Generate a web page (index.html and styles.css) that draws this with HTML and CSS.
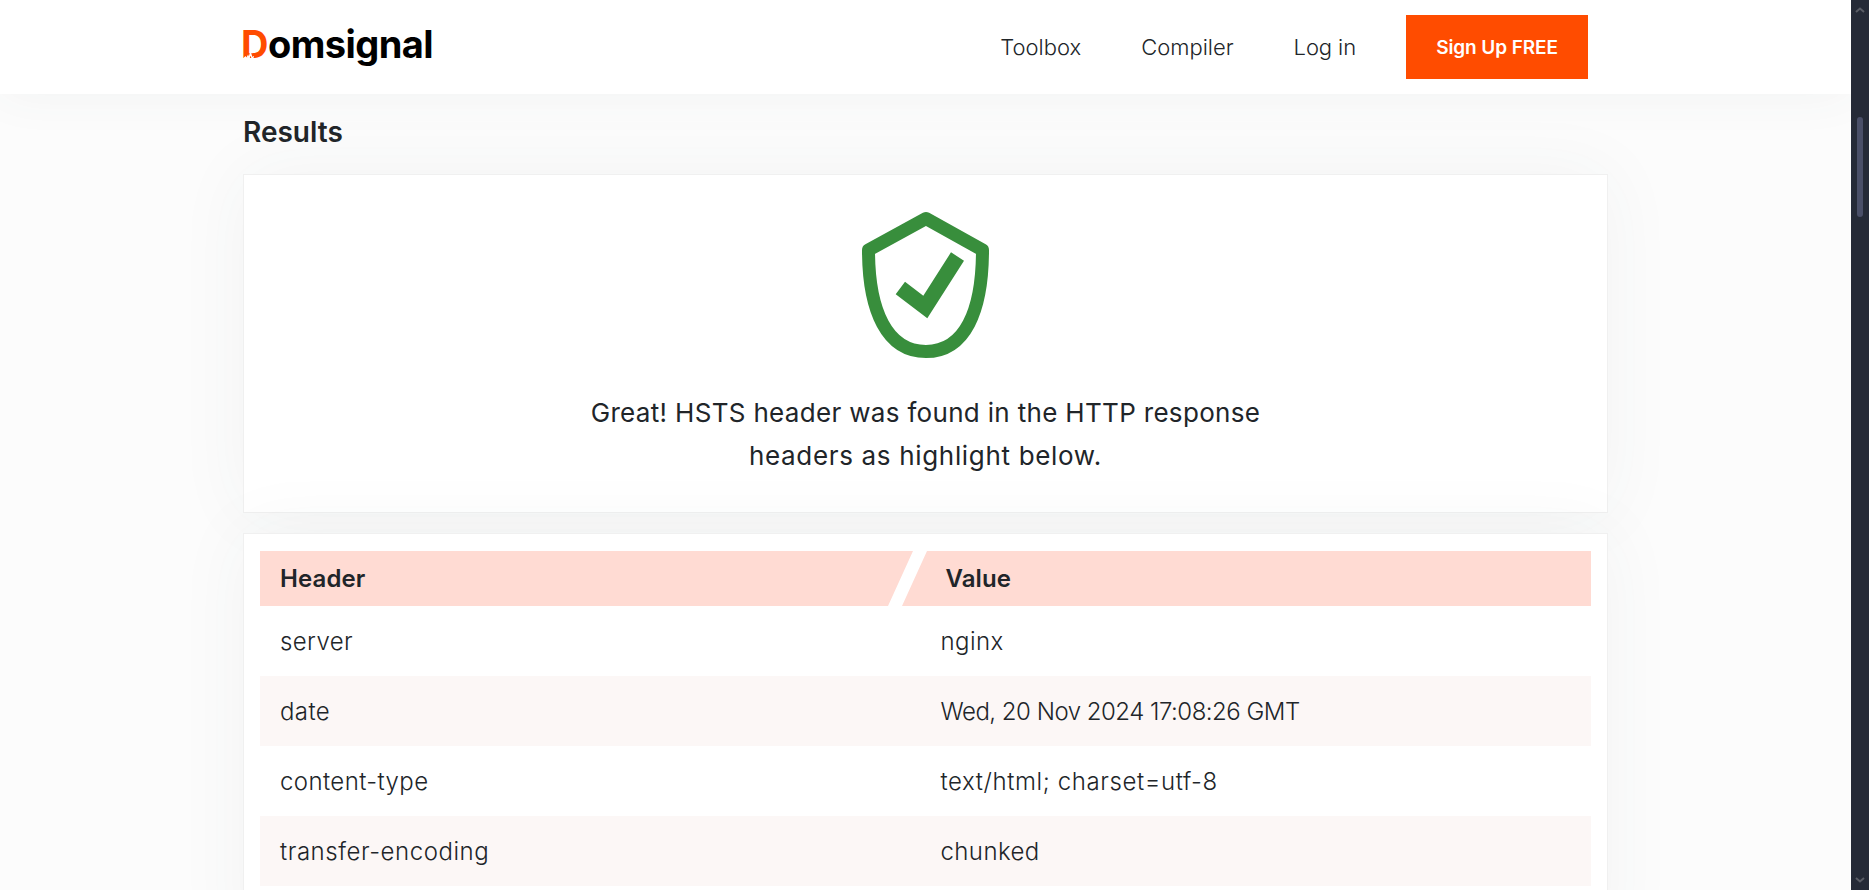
FILE: index.html
```html
<!DOCTYPE html>
<html lang="en">
<head>
<meta charset="utf-8">
<title>HSTS Checker Results - Domsignal</title>
<link rel="stylesheet" href="styles.css">
</head>
<body>
<div class="viewport">
  <div class="page">
    <header class="topbar">
      <div class="topbar-inner">
        <a class="logo"><span class="logo-d">D<svg class="logo-spike" viewBox="0 0 11 8" aria-hidden="true"><path d="M0 7 L2.5 5 L3.5 6.8 L5 4 L6 6.5 L7.5 1 L9 6 L11 4.5" fill="none" stroke="#fff" stroke-width="1.3"/></svg></span>omsignal</a>
        <nav class="nav">
          <a class="nav-link">Toolbox</a>
          <a class="nav-link">Compiler</a>
          <a class="nav-link">Log in</a>
          <a class="signup">Sign Up FREE</a>
        </nav>
      </div>
    </header>
    <main class="content">
      <h2 class="title">Results</h2>
      <section class="card verdict">
        <svg class="shield" viewBox="0 0 128 148" aria-hidden="true">
          <path d="M64 7.5 L6.5 39 C6.5 100 25 140.5 64 140.5 C103 140.5 120.5 100 120.5 39 Z" fill="none" stroke="#388e3c" stroke-width="13" stroke-linejoin="round"/>
          <path d="M33.7 83.3 L43 70.7 L61.3 84.7 L89 41.3 L102 49.7 L65.3 107.3 Z" fill="#388e3c"/>
        </svg>
        <p class="message">Great! HSTS header was found in the HTTP response<br><span class="message-second">headers as highlight below.</span></p>
      </section>
      <section class="card table-card">
        <div class="thead">
          <div class="th th-left">Header</div>
          <div class="th th-right">Value</div>
        </div>
        <div class="row"><span>server</span><span>nginx</span></div>
        <div class="row alt"><span>date</span><span class="digits">Wed, 20 Nov 2024 17:08:26 GMT</span></div>
        <div class="row"><span>content-type</span><span class="mime">text/html; charset=utf-8</span></div>
        <div class="row alt"><span class="long">transfer-encoding</span><span>chunked</span></div>
      </section>
    </main>
  </div>
  <aside class="scrollbar">
    <svg class="arrow" viewBox="0 0 10 6" aria-hidden="true"><path d="M1 5 L5 1.5 L9 5" fill="none" stroke="#5a5d66" stroke-width="2"/></svg>
    <div class="thumb"></div>
    <svg class="arrow arrow-down" viewBox="0 0 10 6" aria-hidden="true"><path d="M1 1 L5 4.5 L9 1" fill="none" stroke="#5a5d66" stroke-width="2"/></svg>
  </aside>
</div>
</body>
</html>
```
FILE: styles.css
```css
* { box-sizing: border-box; }
html, body { margin: 0; height: 100%; overflow: hidden; }
body { font-family: Inter, "Liberation Sans", sans-serif; color: #212529; background: #fcfcfc; }
.viewport { display: flex; height: 890px; }
.page { flex: 1; min-width: 0; overflow: hidden; }
.topbar { height: 94px; background: #fff; position: relative; z-index: 1; box-shadow: 0 0 50px rgba(60, 90, 80, .06); }
.topbar-inner { width: 1364px; margin-left: 243px; height: 94px; display: flex; align-items: center; justify-content: space-between; }
.logo { font-size: 38px; font-weight: 700; color: #000; letter-spacing: -0.55px; line-height: 1; margin-left: -2px; padding-bottom: 6px; }
.logo-d { color: #ff4c00; position: relative; }
.logo-spike { position: absolute; left: 2px; bottom: 7px; width: 11px; height: 8px; }
.nav { display: flex; align-items: center; margin-right: 19px; }
.nav-link { font-size: 22px; font-weight: 300; color: #212529; margin-right: 60px; }
.nav-link:nth-child(3) { margin-right: 50px; letter-spacing: -0.1px; }
.signup { width: 182px; height: 64px; background: #ff4c00; color: #fff; font-size: 19px; font-weight: 600; letter-spacing: -0.1px; display: flex; align-items: center; justify-content: center; }
.content { width: 1365px; margin-left: 243px; padding-top: 19px; }
.title { margin: 0 0 23px; font-size: 28px; line-height: 38px; font-weight: 600; }
.card { background: #fff; border: 1px solid #f0f0f0; box-shadow: 0 0 70px rgba(60, 80, 80, .05); }
.verdict { height: 339px; display: flex; flex-direction: column; align-items: center; padding-top: 36px; }
.shield { width: 128px; height: 148px; display: block; }
.message { margin: 32px 0 0; font-size: 26px; line-height: 43px; letter-spacing: .32px; text-align: center; font-weight: 400; }
.message-second { letter-spacing: .67px; }
.table-card { margin-top: 20px; padding: 17px 16px 0; height: 420px; }
.thead { display: grid; grid-template-columns: 1fr 1fr; height: 55px; background: #ffdbd3; clip-path: polygon(0 0, 653px 0, 628px 100%, 0 100%, 0 0, 667px 0, 100% 0, 100% 100%, 642px 100%, 667px 0); }
.th { font-size: 24px; font-weight: 600; line-height: 55px; letter-spacing: .1px; }
.th-left { padding-left: 20px; }
.th-right { padding-left: 20px; }
.row { display: grid; grid-template-columns: 660.5px 1fr; height: 70px; align-items: center; padding-left: 20px; font-size: 24px; font-weight: 300; letter-spacing: .4px; }
.row .digits { letter-spacing: -0.5px; }
.row .mime { letter-spacing: .6px; }
.row .long { letter-spacing: .55px; }
.alt { background: #fcf7f6; }
.scrollbar { width: 18px; flex: none; background: #252a37; position: relative; }
.arrow { position: absolute; left: 4px; top: 7px; width: 10px; height: 6px; }
.arrow-down { top: auto; bottom: 7px; }
.thumb { position: absolute; left: 6px; top: 117px; width: 6px; height: 100px; border-radius: 3px; background: #4a4f68; }
```
